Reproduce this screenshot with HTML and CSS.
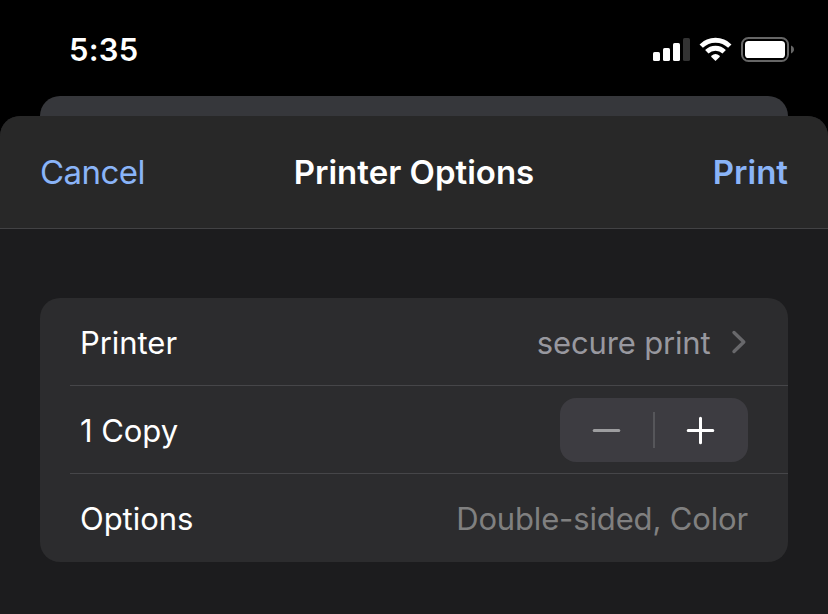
FILE: index.html
```html
<!DOCTYPE html>
<html lang="en">
<head>
<meta charset="utf-8">
<title>Printer Options</title>
<link rel="stylesheet" href="styles.css">
</head>
<body>
<div class="status-bar">
  <span class="time">5:35</span>
  <svg class="status-icons" width="142" height="26" viewBox="0 0 142 26" aria-hidden="true">
    <g fill="#fff">
      <rect x="1" y="15" width="7" height="9" rx="1.6"/>
      <rect x="11" y="11" width="7" height="13" rx="1.6"/>
      <rect x="21" y="6" width="7" height="18" rx="1.6"/>
      <rect x="31" y="1" width="7" height="23" rx="1.6" fill="#333"/>
    </g>
    <g fill="none" stroke="#fff" stroke-width="4.8">
      <path d="M49.200 9.100a20.400 20.400 0 0 1 28.600 0"/>
      <path d="M54.800 14.800a12.400 12.400 0 0 1 17.400 0"/>
    </g>
    <path d="M63.500 24l-4.100-4.100a.8.8 0 0 1 0-1.100 6.300 6.300 0 0 1 8.200 0 .8.8 0 0 1 0 1.100z" fill="#fff"/>
    <rect x="90" y="1" width="46" height="23" rx="6.5" fill="none" stroke="#666" stroke-width="2"/>
    <rect x="93" y="4" width="40" height="17" rx="3.6" fill="#fff"/>
    <path d="M139 8.600c1.800 .7 3 2.200 3 3.900s-1.200 3.200-3 3.900z" fill="#666"/>
  </svg>
</div>
<div class="back-sheet"></div>
<main class="sheet">
  <header class="nav">
    <span class="cancel">Cancel</span>
    <h1 class="title">Printer Options</h1>
    <span class="print">Print</span>
  </header>
  <section class="card">
    <div class="row">
      <span class="label">Printer</span>
      <span class="value">secure print</span>
      <svg class="chevron" width="16" height="24" viewBox="0 0 16 24" aria-hidden="true"><path d="M3 2.500l9.800 9.500L3 21.500" fill="none" stroke="#68686b" stroke-width="3.400" stroke-linecap="round" stroke-linejoin="round"/></svg>
    </div>
    <div class="row">
      <span class="label">1 Copy</span>
      <div class="stepper">
        <svg width="93" height="64" viewBox="0 0 93 64" aria-hidden="true"><path d="M34.200 32.500h24.600" stroke="#9d9d9f" stroke-width="3" stroke-linecap="round"/></svg>
        <span class="divider"></span>
        <svg width="93" height="64" viewBox="0 0 93 64" aria-hidden="true"><path d="M33.200 32.500h24.600M45.500 20.200v24.600" stroke="#fff" stroke-width="3" stroke-linecap="round"/></svg>
      </div>
    </div>
    <div class="row">
      <span class="label">Options</span>
      <span class="value value-dim">Double-sided, Color</span>
    </div>
  </section>
</main>
</body>
</html>
```
FILE: styles.css
```css
* { box-sizing: border-box; }

body {
  margin: 0;
  height: 614px;
  overflow: hidden;
  display: flex;
  flex-direction: column;
  background: #000;
  color: #fff;
  font-family: Inter, "Liberation Sans", sans-serif;
  font-size: 31px;
  white-space: nowrap;
}

.status-bar {
  height: 96px;
  flex: none;
  display: flex;
  justify-content: space-between;
  align-items: flex-start;
  padding: 30px 34px 0 69px;
}

.time {
  font-size: 31px;
  line-height: 40px;
  font-weight: 600;
  letter-spacing: 0.2px;
}

.status-icons { margin-top: 7px; }

.back-sheet {
  height: 20px;
  flex: none;
  margin: 0 40px;
  border-radius: 20px 20px 0 0;
  background: #36373b;
}

.sheet {
  flex: 1;
  border-radius: 20px 20px 0 0;
  overflow: hidden;
  background: #1c1c1e;
}

.nav {
  height: 113px;
  display: grid;
  grid-template-columns: 1fr auto 1fr;
  align-items: center;
  padding: 0 40px;
  border-bottom: 1px solid #424244;
  background: #282828;
  font-size: 33px;
  line-height: 40px;
}

.cancel, .print { color: #8ab4f8; }
.cancel { letter-spacing: -0.55px; }
.print { justify-self: end; font-weight: 600; }
.title { margin: 0; font-size: 33px; font-weight: 600; }

.card {
  margin: 69px 40px 0;
  border-radius: 20px;
  overflow: hidden;
  background: #2c2c2e;
}

.row {
  height: 88px;
  display: flex;
  align-items: center;
  padding: 2px 40px 0 10px;
  margin-left: 30px;
  border-bottom: 1px solid #464649;
}
.row:last-child { border-bottom-color: transparent; }

.label { flex: 1; letter-spacing: -0.05px; }
.value { color: #98989f; letter-spacing: -0.15px; }
.value-dim { color: #808080; }
.chevron { margin: 0 1.5px 2px 20px; }

.stepper {
  display: flex;
  align-items: center;
  width: 188px;
  height: 64px;
  margin-top: -1px;
  border-radius: 16px;
  background: #3d3c41;
}
.divider { width: 2px; height: 36px; background: #56565a; }
```
